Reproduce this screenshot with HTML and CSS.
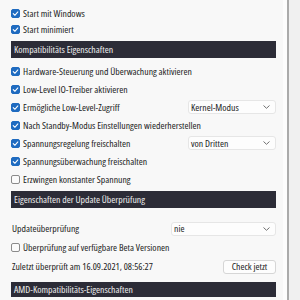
FILE: index.html
```html
<!DOCTYPE html>
<html><head><link rel="stylesheet" href="styles.css"></head>
<body>
<div class="window">
  <div class="content">
    <div class="row r1"><span class="cb on"><svg viewBox="0 0 10 10"><polyline points="2.5,5.2 4.3,7 7.6,3.3"/></svg></span><span>Start mit Windows</span></div>
    <div class="row r1"><span class="cb on"><svg viewBox="0 0 10 10"><polyline points="2.5,5.2 4.3,7 7.6,3.3"/></svg></span><span>Start minimiert</span></div>

    <div class="head h1">Kompatibilitäts Eigenschaften</div>
    <div class="sec1">
      <div class="row"><span class="cb on"><svg viewBox="0 0 10 10"><polyline points="2.5,5.2 4.3,7 7.6,3.3"/></svg></span><span>Hardware-Steuerung und Überwachung aktivieren</span></div>
      <div class="row"><span class="cb on"><svg viewBox="0 0 10 10"><polyline points="2.5,5.2 4.3,7 7.6,3.3"/></svg></span><span>Low-Level IO-Treiber aktivieren</span></div>
      <div class="row"><span class="cb on"><svg viewBox="0 0 10 10"><polyline points="2.5,5.2 4.3,7 7.6,3.3"/></svg></span><span>Ermögliche Low-Level-Zugriff</span>
        <div class="select sel-a"><span>Kernel-Modus</span><svg class="chev" viewBox="0 0 7 4"><polyline points="0.5,0.5 3.5,3.3 6.5,0.5"/></svg></div></div>
      <div class="row"><span class="cb on"><svg viewBox="0 0 10 10"><polyline points="2.5,5.2 4.3,7 7.6,3.3"/></svg></span><span>Nach Standby-Modus Einstellungen wiederherstellen</span></div>
      <div class="row"><span class="cb on"><svg viewBox="0 0 10 10"><polyline points="2.5,5.2 4.3,7 7.6,3.3"/></svg></span><span>Spannungsregelung freischalten</span>
        <div class="select sel-a"><span>von Dritten</span><svg class="chev" viewBox="0 0 7 4"><polyline points="0.5,0.5 3.5,3.3 6.5,0.5"/></svg></div></div>
      <div class="row"><span class="cb on"><svg viewBox="0 0 10 10"><polyline points="2.5,5.2 4.3,7 7.6,3.3"/></svg></span><span>Spannungsüberwachung freischalten</span></div>
      <div class="row"><span class="cb"></span><span>Erzwingen konstanter Spannung</span></div>
    </div>

    <div class="head h2">Eigenschaften der Update Überprüfung</div>
    <div class="sec2">
      <div class="row r2"><span class="plain">Updateüberprüfung</span>
        <div class="select sel-b"><span>nie</span><svg class="chev" viewBox="0 0 7 4"><polyline points="0.5,0.5 3.5,3.3 6.5,0.5"/></svg></div></div>
      <div class="row r2"><span class="cb"></span><span>Überprüfung auf verfügbare Beta Versionen</span></div>
      <div class="row r2"><span class="plain">Zuletzt überprüft am 16.09.2021, 08:56:27</span>
        <div class="btn">Check jetzt</div></div>
    </div>

    <div class="head h3">AMD-Kompatibilitäts-Eigenschaften</div>
  </div>
  <div class="scroll"><div class="track"></div></div>
</div>
</body></html>
```
FILE: styles.css
```css
html,body{margin:0;padding:0}
body{
  width:300px;height:300px;overflow:hidden;
  background:#f8f8f8;color:#1b1b1b;
  font-family:"Open Sans","Noto Sans",sans-serif;
  font-size:9.75px;font-stretch:75%;
}
.window{display:flex;height:300px}
.content{width:283px;box-sizing:border-box;padding:5px 7px 0 11px;display:flex;flex-direction:column}
.row{display:flex;align-items:center;height:18px;white-space:nowrap}
.r1{height:16px}
.r2{height:19px}
.cb{
  width:9px;height:9px;flex:none;margin-right:3px;box-sizing:border-box;
  border:1px solid #8b8b8b;border-radius:2px;background:#fbfbfb;
  display:flex;align-items:center;justify-content:center;
}
.cb.on{background:#1f6bc0;border-color:#1f6bc0}
.cb svg{width:9px;height:9px;flex:none}
.cb polyline{fill:none;stroke:#fff;stroke-width:1.2;stroke-linecap:round;stroke-linejoin:round}
.plain{padding-left:1px}
.head{
  background:#2c2c37;color:#eeeeee;height:17px;line-height:17px;
  padding-left:3px;white-space:nowrap;flex:none;
}
.h1{margin-top:4px}
.sec1{margin-top:4px}
.h2{margin-top:3px}
.sec2{margin-top:11px}
.h3{margin-top:6px;height:15px;line-height:15px}
.select{
  margin-left:auto;height:14px;box-sizing:border-box;
  background:#fdfdfd;border:1px solid #e6e6e6;border-radius:3px;
  display:flex;align-items:center;justify-content:space-between;
  padding:0 5px 0 2px;
}
.sel-a{width:88px}
.sel-b{width:105px}
.chev{width:7px;height:4px}
.chev polyline{fill:none;stroke:#707070;stroke-width:1}
.btn{
  margin-left:auto;width:53px;height:14px;box-sizing:border-box;
  background:#fdfdfd;border:1px solid #d6d6d6;border-radius:3px;
  display:flex;align-items:center;justify-content:center;
}
.scroll{width:17px;display:flex;background:#f0f0f0}
.track{width:4px;background:#fdfdfd;border-right:2px solid #ababab}
```
